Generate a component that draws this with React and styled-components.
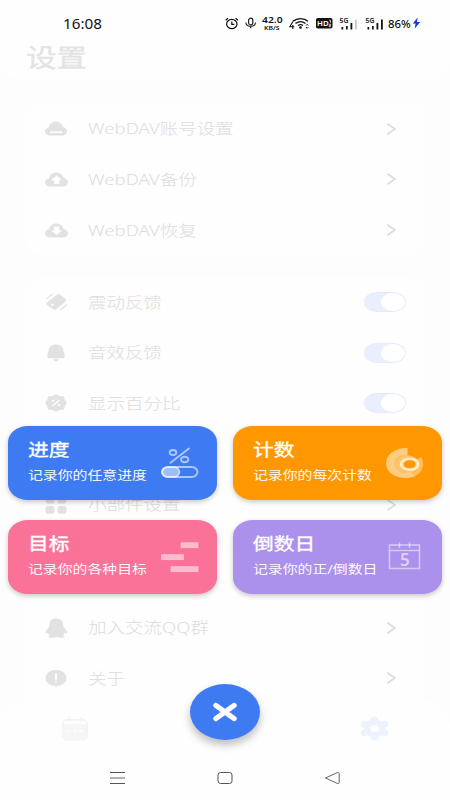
import React from "react";
import styled, { createGlobalStyle } from "styled-components";

const Global = createGlobalStyle`
  * { box-sizing: border-box; }
  html, body { margin: 0; padding: 0; background: #fdfdfd; }
  body { font-family: "Noto Sans", "Noto Sans CJK SC", sans-serif; }
  svg { display: block; flex: none; }
`;

const Screen = styled.main`
  position: relative;
  width: 450px;
  height: 800px;
  overflow: hidden;
  background: #fdfdfd;
  display: flex;
  flex-direction: column;
`;

const StatusBar = styled.div`
  height: 46px;
  flex: none;
  background: #fefefe;
  padding-left: 63px;
  display: grid;
  grid-template-columns: 162px 20px 17px 27px 27px 23px 26px 23px 24px 12px;
  align-items: center;
  color: #111;
`;

const WideText = styled.span`
  display: inline-block;
  white-space: nowrap;
  transform: scaleX(${(p) => p.$stretch || 1.22});
  transform-origin: 0 50%;
`;

const Clock = styled(WideText)`
  font: 400 14px/16px "Noto Sans", sans-serif;
  padding-top: 1px;
`;

const Battery = styled(WideText)`
  font: 500 10.5px/12px "Noto Sans", sans-serif;
  padding-top: 1px;
`;

const Speed = styled.div`
  display: flex;
  flex-direction: column;
  align-items: flex-start;
  padding-top: 2px;
  font: 600 8.6px/8.5px "Noto Sans", sans-serif;
`;

const SpeedUnit = styled(WideText)`
  font-size: 6px;
  line-height: 7px;
  margin-left: 2px;
`;

const Header = styled.header`
  height: 34px;
  flex: none;
  padding-left: 25.5px;
  background: #fefefe;
  border-radius: 0 0 24px 24px;
`;

const Title = styled(WideText)`
  font-size: 24.6px;
  line-height: 24px;
  font-weight: 400;
  color: #e3e3e3;
  -webkit-text-stroke: 0.3px #e3e3e3;
`;

const Groups = styled.div`
  flex: none;
  height: 620px;
  padding: 23.3px 24px 0 26px;
  display: flex;
  flex-direction: column;
  gap: 21.4px;
`;

const Group = styled.section`
  background: #fefefe;
  border-radius: 20px / 16px;
`;

const Row = styled.div`
  height: 50.7px;
  padding: 0 20px 0 19px;
  display: grid;
  grid-template-columns: 43px 1fr auto;
  align-items: center;
`;

const RowLabel = styled(WideText)`
  justify-self: start;
  font-size: 15.2px;
  line-height: 20px;
  padding-bottom: 1px;
  font-weight: 300;
  color: #dcdcdc;
`;

const Toggle = styled.span`
  width: 42px;
  height: 20px;
  border-radius: 13px / 10px;
  background: #e9effd;
  border: 1px solid #e4eafa;
  border-left: 0;
  display: flex;
  justify-content: flex-end;
`;

const Knob = styled.i`
  width: 24px;
  height: 18px;
  border-radius: 50%;
  background: #fff;
`;

const ChevronSlot = styled.span`
  width: 20px;
`;

const TabBar = styled.nav`
  position: absolute;
  left: 0;
  right: 0;
  bottom: 0;
  height: 101px;
  padding-top: 17px;
  background: #fefefe;
  border-radius: 35px 35px 0 0 / 28px 28px 0 0;
  display: flex;
  flex-direction: column;
  justify-content: space-between;
`;

const Tabs = styled.div`
  display: flex;
  justify-content: space-between;
  padding: 0 61px;
`;

const SystemKeys = styled.div`
  display: flex;
  justify-content: space-between;
  padding: 0 109px 15px;
`;

const CloseButton = styled.button`
  position: absolute;
  left: 190px;
  top: 684px;
  width: 70px;
  height: 56px;
  padding: 0;
  border: 0;
  border-radius: 50%;
  background: #3e7bf2;
  box-shadow: 0 5px 9px rgba(0, 0, 0, 0.26);
  display: grid;
  place-items: center;
`;

const ActionMenu = styled.div`
  position: absolute;
  left: 8px;
  top: 426px;
  display: grid;
  grid-template-columns: 209px 209px;
  grid-auto-rows: 74px;
  gap: 20px 16px;
`;

const ActionCard = styled.article`
  border-radius: 20px / 16px;
  background: ${(p) => p.$color};
  color: #fff;
  box-shadow: 0 2px 5px rgba(0, 0, 0, 0.22);
  padding: 12px 18px 0 19.5px;
  display: flex;
  justify-content: space-between;
`;

const ActionText = styled.div`
  width: 130px;
  padding-top: 0.5px;
  display: flex;
  flex-direction: column;
  align-items: flex-start;
  gap: 6px;
`;

const ActionTitle = styled(WideText)`
  font-size: 17px;
  line-height: 22px;
  font-weight: 400;
  -webkit-text-stroke: 0.35px #fff;
`;

const ActionNote = styled(WideText)`
  font-size: 12.2px;
  line-height: 18px;
  opacity: 0.95;
`;

const ActionArt = styled.div`
  width: 39px;
  padding-top: 8px;
`;

const GREY = "#e2e2e2";

const CLOUD = "M5 14.5C2 14.5 0 12.7 0 10.3 0 8.2 1.7 6.7 4 6.4 4.6 2.9 7.5.5 11.3.5c3.6 0 6.600 2.3 7.300 5.600C21.200 6.400 23 8.100 23 10.300c0 2.500-2 4.200-4.800 4.200Z";

const CloudPlain = () => (
  <svg width="22" height="15" viewBox="0 0 23 15" preserveAspectRatio="none">
    <path d={CLOUD} fill={GREY} />
    <rect x="5" y="10.600" width="13.500" height="1.500" rx=".7" fill="#fff" />
  </svg>
);
const CloudUp = () => (
  <svg width="23" height="15" viewBox="0 0 23 15">
    <path d={CLOUD} fill={GREY} />
    <path d="M11.500 3.500 17 8.200h-2.800v3.800H8.900V8.200H6Z" fill="#fff" />
  </svg>
);
const CloudDown = () => (
  <svg width="23" height="15" viewBox="0 0 23 15">
    <path d={CLOUD} fill={GREY} />
    <path d="M11.500 12 17 7.400h-2.800V3.500H8.900v3.900H6Z" fill="#fff" />
  </svg>
);
const Vibrate = () => (
  <svg width="23" height="18" viewBox="0 0 23 18">
    <path d="M12.500 1.200q1.500-1 2.700.2l5.800 4.800q1 1-.2 2l-9.600 8.200q-1.200.9-2.400 0L1.700 11.700q-1.200-1-.1-2Z" fill={GREY} />
    <path d="m1.700 5.700 6-4.700M15.500 16.700l6-4.700" stroke={GREY} strokeWidth="1.300" strokeLinecap="round" />
    <circle cx="7.500" cy="11.800" r="1.200" fill="#fff" />
  </svg>
);
const Bell = () => (
  <svg width="23" height="18" viewBox="0 0 23 18">
    <path d="M11 .5c4.600 0 7.300 2.700 7.500 6.300l1 3.200c.9 2.800-.2 4.300-2.200 4.300H4.700c-2 0-3.100-1.500-2.200-4.300l1-3.200C3.700 3.200 6.400.5 11 .5Z" fill={GREY} />
    <path d="M8.200 15.300h5.600q-1 2.200-2.800 2.200t-2.800-2.200Z" fill={GREY} />
  </svg>
);
const PercentBadge = () => (
  <svg width="22" height="18" viewBox="0 0 22 18">
    <g fill={GREY}>
      <ellipse cx="11" cy="9" rx="9" ry="7.300" />
      <ellipse cx="11" cy="3.400" rx="3.600" ry="2.900" />
      <ellipse cx="11" cy="14.600" rx="3.600" ry="2.900" />
      <ellipse cx="4" cy="9" rx="3.600" ry="2.900" />
      <ellipse cx="18" cy="9" rx="3.600" ry="2.900" />
      <ellipse cx="5.900" cy="5" rx="3.600" ry="2.900" />
      <ellipse cx="16.100" cy="5" rx="3.600" ry="2.900" />
      <ellipse cx="5.900" cy="13" rx="3.600" ry="2.900" />
      <ellipse cx="16.100" cy="13" rx="3.600" ry="2.900" />
    </g>
    <path d="m8 11.500 6-5" stroke="#fff" strokeWidth="1.300" strokeLinecap="round" />
    <ellipse cx="8" cy="7" rx="1.200" ry="1" fill="#fff" />
    <ellipse cx="14" cy="11" rx="1.200" ry="1" fill="#fff" />
  </svg>
);
const Widgets = () => (
  <svg width="22" height="18" viewBox="0 0 22 18" fill={GREY}>
    <rect x="0.500" y="0" width="9" height="7.800" rx="2.200" />
    <rect x="12.500" y="0" width="9" height="7.800" rx="2.200" />
    <rect x="0.500" y="10" width="9" height="7.800" rx="2.200" />
    <rect x="12.500" y="10" width="9" height="7.800" rx="2.200" />
  </svg>
);
const Penguin = () => (
  <svg width="23" height="20" viewBox="0 0 23 20">
    <path d="M11.300.4c4.500 0 7 2.700 7 6.300v2c1.800 1.500 3.800 4.200 3.800 6 0 1.400-1.300 1-2.500-.3-.3 1.400-.9 2.200-1.800 3 1.300.4 1.800.9 1.500 1.500-.5 1-5 1-8 .1-3 .9-7.500.9-8-.1-.3-.6.200-1.100 1.500-1.500-.9-.8-1.500-1.600-1.800-3-1.200 1.300-2.500 1.700-2.500.3 0-1.800 2-4.500 3.800-6v-2C4.300 3.100 6.800.4 11.300.4Z" fill={GREY} />
  </svg>
);
const About = () => (
  <svg width="22" height="18" viewBox="0 0 22 18">
    <ellipse cx="11" cy="9" rx="10.500" ry="8.300" fill={GREY} />
    <path d="M11 5v5" stroke="#fff" strokeWidth="1.800" strokeLinecap="round" />
    <ellipse cx="11" cy="12.600" rx="1.200" ry=".9" fill="#fff" />
  </svg>
);
const Chevron = () => (
  <ChevronSlot>
    <svg width="11" height="12" viewBox="0 0 11 12">
      <path d="M1.300.8 9 6l-7.700 5.200" fill="none" stroke="#dcdcdc" strokeWidth="1.700" />
    </svg>
  </ChevronSlot>
);

const GROUPS = [
  [
    { icon: <CloudPlain />, label: "WebDAV账号设置" },
    { icon: <CloudUp />, label: "WebDAV备份" },
    { icon: <CloudDown />, label: "WebDAV恢复" },
  ],
  [
    { icon: <Vibrate />, label: "震动反馈", toggle: true },
    { icon: <Bell />, label: "音效反馈", toggle: true },
    { icon: <PercentBadge />, label: "显示百分比", toggle: true },
    {},
    { icon: <Widgets />, label: "小部件设置" },
  ],
  [
    {},
    { icon: <Penguin />, label: "加入交流QQ群" },
    { icon: <About />, label: "关于" },
  ],
];

const ProgressArt = () => (
  <svg width="39" height="34" viewBox="0 1 39 34" fill="none" stroke="#fff">
    <g strokeOpacity=".58" strokeWidth="1.900">
      <ellipse cx="13" cy="7.500" rx="3.300" ry="2.500" />
      <ellipse cx="24.700" cy="14.500" rx="3.700" ry="2.700" />
      <path d="M10.500 17.800 29 3.500" strokeLinecap="round" />
      <rect x="2" y="22" width="35.500" height="10" rx="6" ry="5" />
    </g>
    <rect x="2" y="22" width="17.500" height="10" rx="6" ry="5" fill="#fff" fillOpacity=".5" strokeOpacity=".62" strokeWidth="1.600" />
  </svg>
);
const CountArt = () => (
  <svg width="39" height="34" viewBox="0 1 39 34" fill="#fff">
    <path d="M22.500 3v7.300C14 9.800 9.500 13.800 9.500 19c0 6.500 8 10.500 16 7.800l5 4.200C18 36.500 1 30.500 1 18.500 1 8.800 11 2.500 22.500 3Z" fillOpacity=".5" />
    <path d="M36.200 11.700C39.800 18 38.500 26 30.500 31l-5-4.200c6-2 9.500-6.300 6.500-12.300Z" fillOpacity=".36" />
    <path fillRule="evenodd" d="M21.500 10.300c7 0 12.200 3.700 12.200 8.700s-5 8.700-12.200 8.700S9.500 24 9.500 19s5-8.700 12-8.700ZM24.700 14.800c-4.800 0-8 1.900-8 4.400s3.200 4.400 8 4.400 8-1.900 8-4.400-3.200-4.400-8-4.400Z" fillOpacity=".42" />
    <path fillRule="evenodd" d="M24.700 12.700c5.800 0 9.800 2.700 9.800 6.500s-4 6.500-9.800 6.500-9.800-2.700-9.800-6.500 4-6.500 9.800-6.500ZM24.700 15.200c-3.600 0-6 1.700-6 4s2.400 4 6 4 6-1.700 6-4-2.400-4-6-4Z" fillOpacity=".65" />
  </svg>
);
const GoalArt = () => (
  <svg width="39" height="34" viewBox="0 0 39 34" fill="#fff" fillOpacity=".52" stroke="#fff" strokeOpacity=".36">
    <rect x="21" y="2.700" width="17" height="5" />
    <rect x="1.500" y="14.600" width="22" height="5" />
    <rect x="11" y="26.600" width="27" height="5" />
  </svg>
);
const DateNumber = styled.text`
  font: 600 17px "Noto Sans", sans-serif;
`;
const DateArt = () => (
  <svg width="39" height="34" viewBox="0 0 39 34" fill="none" stroke="#fff" strokeOpacity=".5">
    <rect x="4.500" y="5" width="30" height="23.500" strokeWidth="1.600" />
    <path d="M5 10.500h29M14.500 2.500v5.500M24.500 2.500v5.500" strokeWidth="1.500" />
    <DateNumber x="15" y="25.500" fill="#fff" fillOpacity=".6" stroke="none">5</DateNumber>
  </svg>
);

const ACTIONS = [
  { title: "进度", note: "记录你的任意进度", color: "#3e7bf2", art: <ProgressArt /> },
  { title: "计数", note: "记录你的每次计数", color: "#ff9800", art: <CountArt /> },
  { title: "目标", note: "记录你的各种目标", color: "#fb7299", art: <GoalArt /> },
  { title: "倒数日", note: "记录你的正/倒数日", color: "#ab91eb", art: <DateArt /> },
];

const Alarm = () => (
  <svg width="14" height="13" viewBox="0 0 14 12" fill="none" stroke="#111" strokeWidth="1.200">
    <ellipse cx="6.800" cy="6.500" rx="5.200" ry="4.600" />
    <path d="M6.800 4v2.800h2.500M.7 2.800 3 .8M12.900 2.800 10.600.8" />
  </svg>
);
const Mic = () => (
  <svg width="12" height="12" viewBox="0 0 12 12" fill="none" stroke="#222" strokeWidth="1.200">
    <rect x="3.600" y="1.200" width="4.200" height="6.600" rx="2.100" />
    <path d="M.9 5.500c.3 5 9.300 5 9.600 0M5.700 9.500v1.700" />
  </svg>
);
const SmallMark = styled.text`
  font: 600 ${(p) => p.$size}px "Noto Sans", sans-serif;
`;
const Wifi = () => (
  <svg width="21" height="13" viewBox="0 0 21 13" fill="none" stroke="#111" strokeWidth="1.300">
    <path d="M4 4.300c4-3.700 11-3.700 15 0M6.500 6.500c3-2.300 7-2.300 10 0M9 8.600c1.500-1.100 3.500-1.100 5 0" />
    <circle cx="11.500" cy="10.500" r=".7" fill="#111" />
    <path d="M17 8.600 18.200 7.300l1.200 1.300M17 10l1.200 1.300 1.200-1.300" strokeWidth=".9" />
    <path d="M4 4.500.7 9.800h4.600M3.800 8v4" strokeWidth="1.100" />
  </svg>
);
const HdBadge = () => (
  <svg width="17" height="11" viewBox="0 0 17 11">
    <rect width="16.500" height="10.500" rx="1.800" fill="#111" />
    <SmallMark $size={7.800} x="1" y="8.100" fill="#fff">HD</SmallMark>
    <path d="M13.300 2.200h1.100v2.600M13.200 6.200h1.400v1.200h-1.400v1.300h1.600" fill="none" stroke="#fff" strokeWidth=".8" />
  </svg>
);
const Signal = ({ last }) => (
  <svg width="20" height="15" viewBox="0 -2 20 15" fill="#111">
    <SmallMark $size={6.600} x="0.500" y="5" textLength="9" lengthAdjust="spacingAndGlyphs">5G</SmallMark>
    <path d="M2.500 9h1.700v2.500H2.500zM7 8h1.700v3.500H7zM11.500 5h1.800v6.500h-1.800z" />
    <path d="M16 1.500h1.800v10H16z" fill={last} />
  </svg>
);
const Bolt = () => (
  <svg width="9" height="12" viewBox="0 0 9 12">
    <path d="M5.600.5.800 6.600h2.700L2.800 11.500 8.200 5H5Z" fill="#1c35e0" />
  </svg>
);

const CalendarTab = () => (
  <svg width="28" height="25" viewBox="0 0 28 25">
    <rect x="1.500" y="3.500" width="25" height="20.500" rx="4.500" fill="#f6f6f6" stroke="#f3f3f3" />
    <path d="M3 4.800h22v3.400H3z" fill="#fefefe" />
    <path d="M8.500 1v4.500M19.500 1v4.500" stroke="#f3f3f3" strokeWidth="1.600" strokeLinecap="round" />
    <path d="M7 15h2M13 15h2M19 15h2" stroke="#fff" strokeWidth="1.600" strokeLinecap="round" />
  </svg>
);
const GearTab = () => (
  <svg width="29" height="25" viewBox="0 0 29 25" fill="#eef2fe">
    <ellipse cx="14.500" cy="12.500" rx="11" ry="9" />
    <circle cx="14.500" cy="4" r="3.600" />
    <circle cx="14.500" cy="21" r="3.600" />
    <ellipse cx="4.200" cy="8" rx="3.600" ry="3.300" />
    <ellipse cx="24.800" cy="8" rx="3.600" ry="3.300" />
    <ellipse cx="4.200" cy="17" rx="3.600" ry="3.300" />
    <ellipse cx="24.800" cy="17" rx="3.600" ry="3.300" />
    <ellipse cx="14.500" cy="12.500" rx="4.500" ry="3.500" fill="#fefefe" />
  </svg>
);

export default function App() {
  return (
    <Screen>
      <Global />
      <StatusBar>
        <Clock $stretch={1.09}>16:08</Clock>
        <Alarm />
        <Mic />
        <Speed>
          <WideText $stretch={1.2}>42.0</WideText>
          <SpeedUnit $stretch={1.15}>KB/S</SpeedUnit>
        </Speed>
        <Wifi />
        <HdBadge />
        <Signal last="#c8c8c8" />
        <Signal last="#111" />
        <Battery $stretch={1.08}>86%</Battery>
        <Bolt />
      </StatusBar>
      <Header>
        <Title $stretch={1.24}>设置</Title>
      </Header>
      <Groups>
        {GROUPS.map((rows, g) => (
          <Group key={g}>
            {rows.map((row, i) => (
              <Row key={i}>
                {row.icon}
                {row.label && <RowLabel>{row.label}</RowLabel>}
                {row.label && (row.toggle ? <Toggle><Knob /></Toggle> : <Chevron />)}
              </Row>
            ))}
          </Group>
        ))}
      </Groups>
      <TabBar>
        <Tabs>
          <CalendarTab />
          <GearTab />
        </Tabs>
        <SystemKeys>
          <svg width="17" height="14" viewBox="0 0 17 14" stroke="#555" strokeWidth="1">
            <path d="M1 1.500h15M1 12.500h15" />
            <path d="M1 7h15" stroke="#999" strokeWidth="1.500" />
          </svg>
          <svg width="16" height="14" viewBox="0 0 16 14" fill="none" stroke="#555">
            <rect x="1" y="1.500" width="14" height="11" rx="2.500" />
          </svg>
          <svg width="17" height="14" viewBox="0 0 17 14" fill="none" stroke="#666">
            <path d="M1.500 7 13.500 1.500q1.700-.4 1.700 1v9q0 1.400-1.700 1Z" strokeLinejoin="round" />
          </svg>
        </SystemKeys>
      </TabBar>
      <ActionMenu>
        {ACTIONS.map((a) => (
          <ActionCard key={a.title} $color={a.color}>
            <ActionText>
              <ActionTitle>{a.title}</ActionTitle>
              <ActionNote>{a.note}</ActionNote>
            </ActionText>
            <ActionArt>{a.art}</ActionArt>
          </ActionCard>
        ))}
      </ActionMenu>
      <CloseButton aria-label="关闭">
        <svg width="26" height="20" viewBox="0 0 26 20">
          <path d="m3.800 3.400 18.400 13.200M22.200 3.400 3.800 16.600" stroke="#fff" strokeWidth="5" strokeLinecap="round" />
        </svg>
      </CloseButton>
    </Screen>
  );
}
